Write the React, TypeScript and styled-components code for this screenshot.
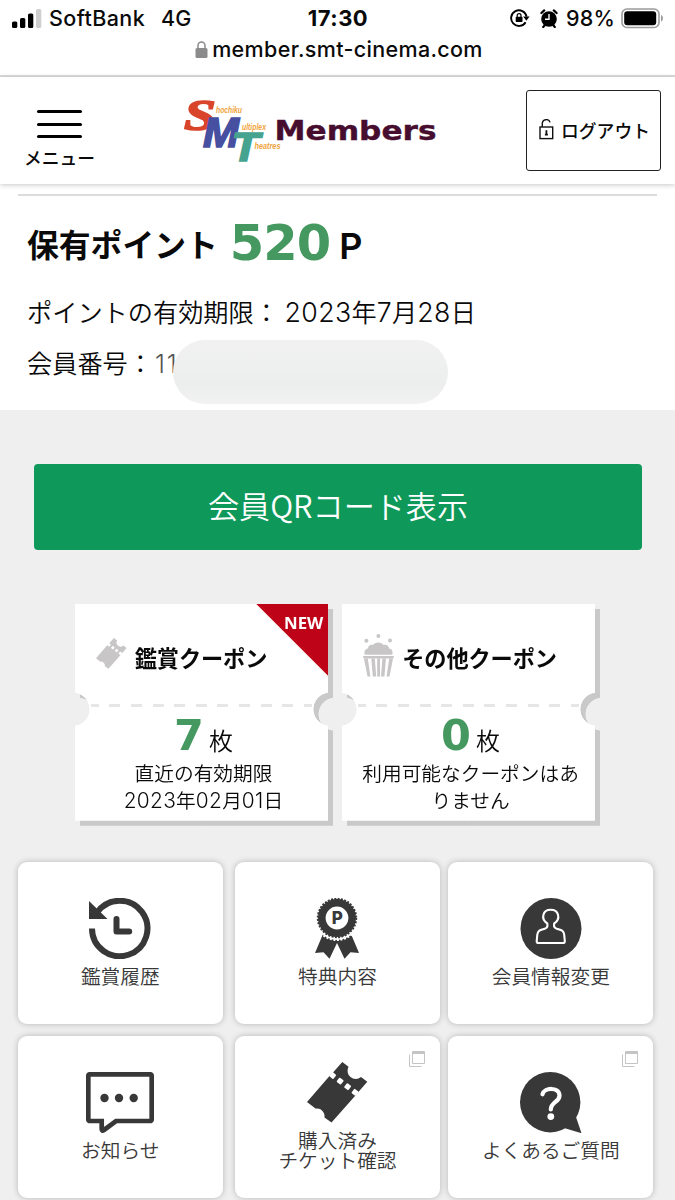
import React from 'react';
import styled, { createGlobalStyle } from 'styled-components';

const GlobalStyle = createGlobalStyle`
  * { box-sizing: border-box; }
  body {
    margin: 0;
    background: #efefef;
    color: #0a0a0a;
    font-family: Inter, "Noto Sans CJK JP", sans-serif;
    overflow: hidden;
  }
`;

const CJK = '"Noto Sans CJK JP", sans-serif';
const GREEN = '#45985f';
const INK = '#383838';
const GREY = '#c8c6c7';

const Page = styled.div`
  width: 675px;
  height: 1200px;
  overflow: hidden;
  background: #efefef;
`;

/* ---------- browser chrome ---------- */

const Chrome = styled.div`
  height: 77px;
  background: #fff;
  border-bottom: 2px solid #dcdcdc;
`;

const StatusBar = styled.div`
  display: grid;
  grid-template-columns: 1fr auto 1fr;
  align-items: center;
  height: 36px;
  padding: 0 11px 0 12px;
`;

const StatusGroup = styled.div<{ $end?: boolean }>`
  display: flex;
  align-items: center;
  justify-content: ${(p) => (p.$end ? 'flex-end' : 'flex-start')};
`;

const StatusText = styled.span<{ $bold?: boolean; $ml?: number; $mr?: number; $track?: number }>`
  font-size: ${(p) => (p.$bold ? 22 : 21.5)}px;
  line-height: 26px;
  font-weight: ${(p) => (p.$bold ? 700 : 500)};
  letter-spacing: ${(p) => p.$track ?? 0}px;
  margin-left: ${(p) => p.$ml ?? 0}px;
  margin-right: ${(p) => p.$mr ?? 0}px;
  white-space: nowrap;
`;

const StatusIcons = styled.span`
  display: flex;
  align-items: center;
  gap: 10px;
  margin-right: 8px;
`;

const AddressBar = styled.div`
  display: flex;
  align-items: center;
  justify-content: center;
  gap: 4px;
  height: 26px;
  padding-left: 3px;
  font-size: 21.5px;
  font-weight: 500;
  letter-spacing: 0.34px;
`;

/* ---------- site header ---------- */

const Header = styled.header`
  position: relative;
  display: flex;
  align-items: center;
  justify-content: space-between;
  height: 107px;
  padding: 0 14px 0 24px;
  background: #fff;
  box-shadow: 0 1px 5px rgba(0, 0, 0, 0.22);
`;

const MenuButton = styled.div`
  display: flex;
  flex-direction: column;
  align-items: center;
  width: 71px;
  padding-top: 18px;
`;

const Bars = styled.div`
  display: grid;
  gap: 9.5px;
  width: 45px;
  margin-bottom: 7px;
`;

const Bar = styled.i`
  height: 3px;
  border-radius: 1.5px;
  background: #000;
`;

const MenuLabel = styled.span`
  font: 500 17.8px/24px ${CJK};
  white-space: nowrap;
`;

const LogoutButton = styled.div`
  display: flex;
  align-items: center;
  justify-content: center;
  gap: 7px;
  width: 135px;
  height: 81px;
  margin-bottom: 1px;
  padding-left: 2px;
  border: 1px solid #222;
  border-radius: 3px;
  font: 500 17.8px/24px ${CJK};
`;

/* ---------- points ---------- */

const Points = styled.section`
  height: 226px;
  padding: 10px 18px 0;
  background: #fff;
`;

const Rule = styled.div`
  height: 2px;
  background: #dcdcdc;
`;

const PointsTitle = styled.div`
  display: flex;
  align-items: baseline;
  height: 60px;
  margin-top: 14px;
  padding-left: 9px;
  font: 700 31.8px/60px ${CJK};
`;

const PointsValue = styled.b`
  margin-left: 12px;
  font: 700 49.5px/60px "DejaVu Sans";
  letter-spacing: -1px;
  color: ${GREEN};
  transform: translateY(3px);
`;

const PointsUnit = styled.span`
  margin-left: 9px;
  font: 600 36px/60px Inter;
  transform: translateY(2px);
`;

const InfoLine = styled.div<{ $mt: number }>`
  display: flex;
  align-items: baseline;
  position: relative;
  height: 38px;
  margin-top: ${(p) => p.$mt}px;
  padding-left: 9px;
  font: 350 25.2px/38px ${CJK};
  white-space: pre;
`;

/* figures are set a little larger than the surrounding kana */
const Num = styled.span`
  font-family: Inter;
  font-size: 1.06em;
  font-weight: 300;
  line-height: 1;
  letter-spacing: 0.015em;
`;

const MemberDigits = styled.span`
  margin-left: 2px;
  font-family: Inter;
  font-weight: 300;
  letter-spacing: 2px;
  color: #555;
`;

const Redaction = styled.span`
  position: absolute;
  left: 155px;
  top: -3px;
  width: 275px;
  height: 64px;
  border-radius: 32px;
  background: linear-gradient(#f1f1f1, #eceeed 70%, #f1f2f1);
`;

/* ---------- QR button and coupons ---------- */

const QrButton = styled.div`
  height: 86px;
  margin: 54px 33px 0 34px;
  border-radius: 4px;
  background: #0e995b;
  color: #fff;
  text-align: center;
  font: 350 31.1px/82px ${CJK};
`;

const Coupons = styled.section`
  display: flex;
  gap: 13.5px;
  margin: 54px 0 0 74.7px;
`;

const CouponShadow = styled.div`
  filter: drop-shadow(5px 5px 0 #c9c9c9);
`;

const CouponCard = styled.article`
  position: relative;
  display: flex;
  flex-direction: column;
  align-items: center;
  width: 253.6px;
  height: 216.5px;
  background: #fff;
  mask: radial-gradient(circle at -2px 105.5px, transparent 16.2px, #000 16.8px) left / 50.2% 100% no-repeat,
    radial-gradient(circle at calc(100% + 2px) 105.5px, transparent 16.2px, #000 16.8px) right / 50.2% 100% no-repeat;
`;

const CouponTitle = styled.h2<{ $shift: number }>`
  display: flex;
  align-items: center;
  gap: 8px;
  height: 44px;
  margin: 31px 0 0 ${(p) => p.$shift}px;
  font: 700 22.2px/44px ${CJK};
  letter-spacing: -0.1px;
  white-space: nowrap;
`;

const CouponIcon = styled.span<{ $lift: number }>`
  display: flex;
  margin-bottom: ${(p) => p.$lift}px;
`;

const Perforation = styled.div`
  width: 220.5px;
  height: 3px;
  margin-top: 25px;
  background: repeating-linear-gradient(90deg, #e6e6e6 0 11px, transparent 11px 21.6px) -3.3px 0 / 240px 3px;
`;

const CouponCount = styled.div`
  display: flex;
  align-items: baseline;
  gap: 5px;
  height: 49px;
  margin-top: 3px;
  padding-left: 4px;
  font: 350 24px/50px ${CJK};
`;

const CountValue = styled.b`
  font: 700 43px/50px "DejaVu Sans";
  color: ${GREEN};
`;

const CouponNote = styled.p`
  width: 226px;
  margin: 0;
  padding-left: 4px;
  text-align: center;
  font: 350 19.7px/27px ${CJK};
  white-space: nowrap;
`;

const NewRibbon = styled.div`
  position: absolute;
  top: 0;
  right: 0;
  width: 72px;
  height: 72px;
  padding: 8px 5px 0 0;
  background: #be0319;
  clip-path: polygon(0 0, 100% 0, 100% 100%);
  color: #fff;
  text-align: right;
  font: 700 16.8px/22px "Open Sans";
`;

/* ---------- tiles ---------- */

const Tiles = styled.nav`
  display: grid;
  grid-template-columns: 208.7px 205px 205px;
  grid-auto-rows: 162px;
  justify-content: start;
  row-gap: 12.3px;
  column-gap: 8.3px;
  margin: 41px 0 0 18px;
  & > :nth-child(3n + 1) {
    margin-right: 4.2px;
  }
`;

const Tile = styled.a`
  position: relative;
  display: flex;
  flex-direction: column;
  align-items: center;
  justify-content: center;
  gap: 7px;
  border-radius: 9px;
  background: #fff;
  box-shadow: 0 0 6px rgba(0, 0, 0, 0.24);
  color: ${INK};
`;

const TileLabel = styled.span`
  margin-bottom: 1px;
  font: 350 19.7px/20px ${CJK};
  text-align: center;
  white-space: pre;
`;

const ExternalMark = styled.span`
  position: absolute;
  top: 15px;
  right: 15px;
  display: flex;
`;

/* ---------- drawings ---------- */

const SignalIcon = () => (
  <svg width="30" height="19" viewBox="0 0 30 19">
    <rect x="0" y="12.5" width="5.3" height="6.5" rx="1.5" />
    <rect x="8" y="9" width="5.3" height="10" rx="1.5" />
    <rect x="16" y="4.5" width="5.3" height="14.5" rx="1.5" />
    <rect x="24" y="0" width="5.3" height="19" rx="1.5" fill="#cfcfcf" />
  </svg>
);

const RotationLockIcon = () => (
  <svg width="20" height="18" viewBox="0 0 20 18" fill="none">
    <path d="M15.6 13.2A7.8 7.8 0 1 1 16.6 7.6" stroke="#000" strokeWidth="1.9" />
    <path d="M13.2 7.4h6.4l-3.2 4.4z" fill="#000" />
    <rect x="5.7" y="7.8" width="6.8" height="5.2" rx="0.8" fill="#000" />
    <path d="M7.2 8V6.5a1.9 1.9 0 0 1 3.8 0V8" stroke="#000" strokeWidth="1.2" />
  </svg>
);

const AlarmIcon = () => (
  <svg width="18" height="19" viewBox="0 0 18 19">
    <circle cx="9" cy="10" r="7.8" />
    <path d="M1.4 4 4.2 1.4M16.6 4 13.8 1.4M3.2 18l2-2.4M14.8 18l-2-2.4" stroke="#000" strokeWidth="2.2" strokeLinecap="round" />
    <path d="M9 5v5.2H5" stroke="#fff" strokeWidth="1.4" fill="none" />
  </svg>
);

const BatteryIcon = () => (
  <svg width="43" height="21" viewBox="0 0 43 21">
    <rect x="1" y="1" width="37" height="18.5" rx="5" fill="none" stroke="#9b9b9b" strokeWidth="1.6" />
    <rect x="3.2" y="3.2" width="32" height="14" rx="3" />
    <path d="M40 7v6.5c2.6-1 2.6-5.5 0-6.5" fill="#9b9b9b" />
  </svg>
);

const PadlockIcon = () => (
  <svg width="13" height="17" viewBox="0 0 13 17">
    <rect x="0.5" y="7" width="12" height="10" rx="1.5" fill="#8b8b8b" />
    <path d="M3 8V4.6a3.5 3.5 0 0 1 7 0V8" fill="none" stroke="#8b8b8b" strokeWidth="1.5" />
  </svg>
);

const UnlockIcon = () => (
  <svg width="15" height="23" viewBox="0 0 15 23" fill="none" stroke="#111" strokeWidth="1.4">
    <rect x="1" y="8" width="12.7" height="11.6" />
    <path d="M3.3 8V4.6a4 4 0 0 1 7.8-1.2" />
    <path d="M7.4 11.2v4.5M5.9 15.7h3" strokeWidth="1.8" />
  </svg>
);

const Logo = () => (
  <svg width="260" height="70" viewBox="180.500 96 260 70" overflow="visible">
    <g fontWeight="700" fontStyle="italic">
      <text x="183.5" y="129.500" fontFamily="Liberation Serif" fontSize="44" fill="#d9452b" stroke="#d9452b" strokeWidth="1.6" textLength="32" lengthAdjust="spacingAndGlyphs">S</text>
      <text x="202.5" y="146.5" fontFamily="Liberation Sans" fontSize="42" fill="#474fa0" stroke="#474fa0" strokeWidth="1.6" textLength="36" lengthAdjust="spacingAndGlyphs">M</text>
      <text x="231" y="160.5" fontFamily="Liberation Sans" fontSize="41" fill="#45a390" stroke="#45a390" strokeWidth="1.6" textLength="28" lengthAdjust="spacingAndGlyphs">T</text>
      <g fontFamily="Liberation Sans Narrow, Liberation Sans" fontSize="9" fill="#f0a43c">
        <text x="215.5" y="113" textLength="26" lengthAdjust="spacingAndGlyphs">hochiku</text>
        <text x="241.5" y="130" textLength="24" lengthAdjust="spacingAndGlyphs">ultiplex</text>
        <text x="254" y="148.5" textLength="26" lengthAdjust="spacingAndGlyphs">heatres</text>
      </g>
    </g>
    <text x="274" y="139.500" fontFamily="DejaVu Sans" fontWeight="700" fontSize="26" fill="#470d2f" stroke="#470d2f" strokeWidth="0.4" textLength="162" lengthAdjust="spacingAndGlyphs">Members</text>
  </svg>
);

const TicketIcon = ({ size = 61, color = INK }: { size?: number; color?: string }) => (
  <svg width={size} height={size} viewBox="0 0 61 61">
    <path
      fill={color}
      d="M0 40 22.5 14 26 10.5 35.3 0 41.5 4.8A8.2 8.2 0 0 0 54 15L60.3 19.7 50.5 31 48 34 24.5 60.5 17.5 55.5A8 8 0 0 0 8.5 46.5Z"
    />
    <g fill="#fff">
      {[0, 1, 2, 3].map((i) => (
        <rect
          key={i}
          x="-2.7"
          y="-2.7"
          width="5.4"
          height="5.4"
          rx="1"
          transform={`translate(${25.7 + i * 7.45} ${13.5 + i * 5.6}) rotate(38)`}
        />
      ))}
    </g>
  </svg>
);

const PopcornIcon = () => (
  <svg width="31" height="43" viewBox="0 0 31 43" fill={GREY}>
    <circle cx="3.4" cy="6.7" r="2" />
    <circle cx="15.4" cy="2" r="2" />
    <circle cx="27" cy="6.5" r="2" />
    <path d="M1.7 20.7C.5 17 3 14.5 5 14.5 5 11.5 8 10 10 11 11.5 7.5 19 7.5 20.5 11c2.5-1 5.5.5 5.5 3.5 2.5 0 4.5 3 3.2 6.2z" />
    <path d="M0 22h31l-.6 2.6H.6z" />
    <path d="M1 24.5h3.8l2.6 18H4.5zM8.3 24.5h3.5l1.4 18h-3.4zM14.2 24.5h2.8v18h-2.8zM19.4 24.5h3.5l-1.5 18H18zM26.2 24.5h3.8l-3.5 18h-2.9z" />
  </svg>
);

const HistoryIcon = () => (
  <svg width="62" height="61" viewBox="0 0 62 61" fill="none" stroke={INK} strokeWidth="6">
    <path d="M3 30.5A27.7 27.7 0 1 0 8 14.6" />
    <path d="M0 3v18h18.5z" fill={INK} stroke="none" />
    <path d="M27.5 21v12.5h12.7" strokeLinecap="round" strokeLinejoin="round" />
  </svg>
);

const AwardIcon = () => (
  <svg width="46" height="61" viewBox="0 0 46 61" fill={INK}>
    <path d="M9 36 1 55l8.5-.8 6 6.6L23 45l7.5 15.8 6-6.6L45 55l-8-19z" />
    <circle cx="23" cy="20" r="22" fill="#fff" />
    <circle cx="23" cy="20" r="22" fill="none" stroke="#fff" strokeWidth="2" strokeDasharray="2 1.6" />
    <circle cx="23" cy="20" r="15.2" fill="none" stroke={INK} strokeWidth="7.6" />
    <circle cx="23" cy="20" r="19.3" fill="none" stroke={INK} strokeWidth="1.8" strokeDasharray="2 1.37" />
    <text x="23.3" y="26" textAnchor="middle" fontFamily="Inter" fontWeight="800" fontSize="17">P</text>
  </svg>
);

const MemberIcon = () => (
  <svg width="62" height="61" viewBox="0 0 62 61">
    <circle cx="31" cy="30.5" r="30.5" fill={INK} />
    <path
      fill="none"
      stroke="#fff"
      strokeWidth="2.1"
      strokeLinejoin="round"
      d="M27.3 25.5C20.5 21 22.500 11.800 30.700 11.800S41 21 34.200 25.500c-.5 2.500 0 4.500 2.500 5.200 5 1.300 7 2 7.500 6l.6 6.300q.1 2-1.600 2H18.300q-1.700 0-1.600-2l.6-6.300c.5-4 2.500-4.700 7.500-6 2.500-.7 3-2.700 2.500-5.200z"
    />
  </svg>
);

const ChatIcon = () => (
  <svg width="68" height="61" viewBox="0 0 68 61">
    <path
      fill="none"
      stroke={INK}
      strokeWidth="4.7"
      d="M15.7 49H4.3q-2 0-2-2V4.3q0-2 2-2H63.7q2 0 2 2V47q0 2-2 2H30L18 58q-2.3 1.5-2.3-1Z"
    />
    <g fill={INK}>
      <circle cx="18.5" cy="26" r="4.2" />
      <circle cx="33" cy="26" r="4.2" />
      <circle cx="47.7" cy="26" r="4.2" />
    </g>
  </svg>
);

const QuestionIcon = () => (
  <svg width="62" height="61" viewBox="0 0 62 61">
    <circle cx="30.2" cy="30.2" r="30.2" fill={INK} />
    <path d="M56 45l5.5 16.2L44 56z" fill={INK} />
    <path d="M22.5 22.3C24 15.5 39 14.5 39.5 23.5 39.7 30 30.8 30 30.8 37.5" fill="none" stroke="#fff" strokeWidth="4.2" strokeLinecap="round" />
    <circle cx="30.8" cy="44.6" r="3.4" fill="#fff" />
  </svg>
);

const WindowIcon = () => (
  <svg width="16" height="16" viewBox="0 0 16 16" fill="none" stroke="#c4c4c4" strokeWidth="1">
    <path d="M3.5.5h12v12h-12zM3.5 1.5h12M3.5 2.5h12" />
    <path d="M.5 3.5v12h12" />
  </svg>
);

/* ---------- content ---------- */

const tiles = [
  { label: '鑑賞履歴', icon: <HistoryIcon /> },
  { label: '特典内容', icon: <AwardIcon /> },
  { label: '会員情報変更', icon: <MemberIcon /> },
  { label: 'お知らせ', icon: <ChatIcon /> },
  { label: '購入済み\nチケット確認', icon: <TicketIcon />, external: true },
  { label: 'よくあるご質問', icon: <QuestionIcon />, external: true },
];

const coupons = [
  {
    title: '鑑賞クーポン',
    icon: <TicketIcon size={31} color={GREY} />,
    lift: 7,
    count: 7,
    note: (
      <>
        直近の有効期限
        <br />
        <Num>2023</Num>年<Num>02</Num>月<Num>01</Num>日
      </>
    ),
    isNew: true,
    shift: -40,
  },
  {
    title: 'その他クーポン',
    icon: <PopcornIcon />,
    lift: 3,
    count: 0,
    note: (
      <>
        利用可能なクーポンはあ
        <br />
        りません
      </>
    ),
    isNew: false,
    shift: -17,
  },
];

export default function App() {
  return (
    <Page>
      <GlobalStyle />
      <Chrome>
        <StatusBar>
          <StatusGroup>
            <SignalIcon />
            <StatusText $ml={7} $track={0.4}>SoftBank</StatusText>
            <StatusText $ml={16}>4G</StatusText>
          </StatusGroup>
          <StatusText $bold $track={0.5}>17:30</StatusText>
          <StatusGroup $end>
            <StatusIcons>
              <RotationLockIcon />
              <AlarmIcon />
            </StatusIcons>
            <StatusText $mr={6} $track={0.2}>98%</StatusText>
            <BatteryIcon />
          </StatusGroup>
        </StatusBar>
        <AddressBar>
          <PadlockIcon />
          member.smt-cinema.com
        </AddressBar>
      </Chrome>

      <Header>
        <MenuButton>
          <Bars>
            <Bar />
            <Bar />
            <Bar />
          </Bars>
          <MenuLabel>メニュー</MenuLabel>
        </MenuButton>
        <Logo />
        <LogoutButton>
          <UnlockIcon />
          ログアウト
        </LogoutButton>
      </Header>

      <Points>
        <Rule />
        <PointsTitle>
          保有ポイント
          <PointsValue>520</PointsValue>
          <PointsUnit>P</PointsUnit>
        </PointsTitle>
        <InfoLine $mt={22}>
          ポイントの有効期限： <Num>2023</Num>年<Num>7</Num>月<Num>28</Num>日
        </InfoLine>
        <InfoLine $mt={13}>
          会員番号：<MemberDigits>11</MemberDigits>
          <Redaction />
        </InfoLine>
      </Points>

      <QrButton>会員QRコード表示</QrButton>

      <Coupons>
        {coupons.map((c) => (
          <CouponShadow key={c.title}>
            <CouponCard>
              <CouponTitle $shift={c.shift}>
                <CouponIcon $lift={c.lift}>{c.icon}</CouponIcon>
                {c.title}
              </CouponTitle>
              <Perforation />
              <CouponCount>
                <CountValue>{c.count}</CountValue>枚
              </CouponCount>
              <CouponNote>{c.note}</CouponNote>
              {c.isNew && <NewRibbon>NEW</NewRibbon>}
            </CouponCard>
          </CouponShadow>
        ))}
      </Coupons>

      <Tiles>
        {tiles.map((t) => (
          <Tile key={t.label}>
            {t.icon}
            <TileLabel>{t.label}</TileLabel>
            {t.external && (
              <ExternalMark>
                <WindowIcon />
              </ExternalMark>
            )}
          </Tile>
        ))}
      </Tiles>
    </Page>
  );
}
